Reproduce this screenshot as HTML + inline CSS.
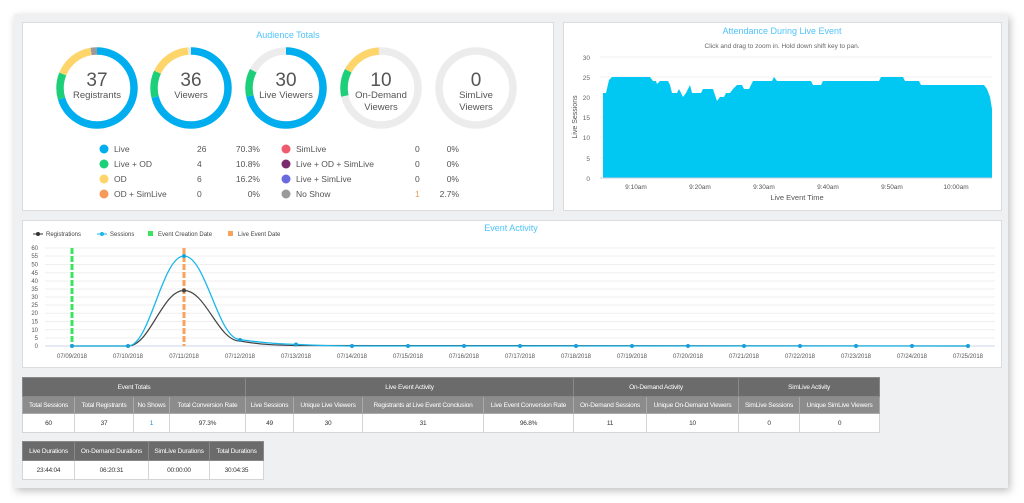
<!DOCTYPE html>
<html><head><meta charset="utf-8"><style>
*{margin:0;padding:0;box-sizing:border-box}
body{width:1024px;height:503px;background:#fff;font-family:"Liberation Sans",sans-serif;position:relative;overflow:hidden;color:#555}
.frame{position:absolute;left:14px;top:14px;width:994px;height:474px;background:#eff0f2;box-shadow:2px 3px 8px rgba(0,0,0,.25)}
.panel{position:absolute;background:#fff;border:1px solid #dcdcdc}
table{position:absolute;border-collapse:collapse;font-size:6.5px;letter-spacing:-0.2px;font-family:"Liberation Sans",sans-serif;table-layout:fixed}
td,th{border:1px solid #d5d5d5;text-align:center;padding:0;white-space:nowrap;overflow:hidden}
th{color:#fff;font-weight:normal}
.h1 th{background:#6b6b6b;height:19px;border-color:#888}
.h2 th{background:#8c8c8c;height:17px;border-color:#aaa}
td{background:#fff;height:19px;color:#333}
</style></head><body>
<div class="frame"></div>
<div class="panel" style="left:22px;top:22px;width:532px;height:189px"></div>
<div class="panel" style="left:563px;top:22px;width:439px;height:189px"></div>
<div class="panel" style="left:22px;top:220px;width:980px;height:148px"></div>

<svg width="1024" height="503" style="position:absolute;left:0;top:0" font-family="Liberation Sans, sans-serif">
<text x="288" y="38" font-size="9" fill="#4fc3f7" text-anchor="middle">Audience Totals</text>
<g fill="none" stroke-width="7.5">
 <g transform="translate(97,88) rotate(-90)">
  <circle r="37" stroke="#00aeef" stroke-dasharray="163.4 232.5"/>
  <circle r="37" stroke="#1ecf7a" stroke-dasharray="0 163.4 25.1 232.5"/>
  <circle r="37" stroke="#fdd56b" stroke-dasharray="0 188.5 37.7 232.5"/>
  <circle r="37" stroke="#9a9a9a" stroke-dasharray="0 226.2 6.3 232.5"/>
 </g>
 <g transform="translate(191,88) rotate(-90)">
  <circle r="37" stroke="#00aeef" stroke-dasharray="165 232.5"/>
  <circle r="37" stroke="#1ecf7a" stroke-dasharray="0 165 25.4 232.5"/>
  <circle r="37" stroke="#fdd56b" stroke-dasharray="0 190.4 38.6 232.5"/>
  <circle r="37" stroke="#e8e8e8" stroke-dasharray="0 229 3.5 232.5"/>
 </g>
 <g transform="translate(286,88) rotate(-90)">
  <circle r="37" stroke="#ececec"/>
  <circle r="37" stroke="#00aeef" stroke-dasharray="166 232.5"/>
  <circle r="37" stroke="#1ecf7a" stroke-dasharray="0 166 26 232.5"/>
 </g>
 <g transform="translate(381,88) rotate(-90)">
  <circle r="37" stroke="#ececec"/>
  <circle r="37" stroke="#1ecf7a" stroke-dasharray="0 166 26 232.5"/>
  <circle r="37" stroke="#fdd56b" stroke-dasharray="0 192 38 232.5"/>
 </g>
 <g transform="translate(476,88) rotate(-90)">
  <circle r="37" stroke="#ececec"/>
 </g>
</g>
<g fill="#555" text-anchor="middle">
 <text x="97" y="86" font-size="19">37</text><text x="97" y="98" font-size="9.5">Registrants</text>
 <text x="191" y="86" font-size="19">36</text><text x="191" y="98" font-size="9.5">Viewers</text>
 <text x="286" y="86" font-size="19">30</text><text x="286" y="98" font-size="9.5">Live Viewers</text>
 <text x="381" y="86" font-size="19">10</text><text x="381" y="98" font-size="9.5">On-Demand</text><text x="381" y="110" font-size="9.5">Viewers</text>
 <text x="476" y="86" font-size="19">0</text><text x="476" y="98" font-size="9.5">SimLive</text><text x="476" y="110" font-size="9.5">Viewers</text>
</g>
<g font-size="8.5" fill="#555">
 <circle cx="104" cy="149" r="4.5" fill="#00aeef"/><text x="114" y="152">Live</text><text x="197" y="152">26</text><text x="260" y="152" text-anchor="end">70.3%</text>
 <circle cx="104" cy="164" r="4.5" fill="#1ecf7a"/><text x="114" y="167">Live + OD</text><text x="197" y="167">4</text><text x="260" y="167" text-anchor="end">10.8%</text>
 <circle cx="104" cy="179" r="4.5" fill="#fdd56b"/><text x="114" y="182">OD</text><text x="197" y="182">6</text><text x="260" y="182" text-anchor="end">16.2%</text>
 <circle cx="104" cy="194" r="4.5" fill="#f59a5a"/><text x="114" y="197">OD + SimLive</text><text x="197" y="197">0</text><text x="260" y="197" text-anchor="end">0%</text>
 <circle cx="286" cy="149" r="4.5" fill="#ee5a6e"/><text x="296" y="152">SimLive</text><text x="415" y="152">0</text><text x="459" y="152" text-anchor="end">0%</text>
 <circle cx="286" cy="164" r="4.5" fill="#7a2a6e"/><text x="296" y="167">Live + OD + SimLive</text><text x="415" y="167">0</text><text x="459" y="167" text-anchor="end">0%</text>
 <circle cx="286" cy="179" r="4.5" fill="#6a6ae0"/><text x="296" y="182">Live + SimLive</text><text x="415" y="182">0</text><text x="459" y="182" text-anchor="end">0%</text>
 <circle cx="286" cy="194" r="4.5" fill="#999"/><text x="296" y="197">No Show</text><text x="415" y="197" fill="#e0a050">1</text><text x="459" y="197" text-anchor="end">2.7%</text>
</g>

<text x="782" y="34" font-size="9" fill="#4fc3f7" text-anchor="middle">Attendance During Live Event</text>
<text x="782" y="48" font-size="6.5" fill="#666" text-anchor="middle">Click and drag to zoom in. Hold down shift key to pan.</text>
<g stroke="#f0f0f0" stroke-width="1">
 <line x1="600" y1="57" x2="992" y2="57"/><line x1="600" y1="77" x2="992" y2="77"/><line x1="600" y1="97" x2="992" y2="97"/><line x1="600" y1="117" x2="992" y2="117"/><line x1="600" y1="137" x2="992" y2="137"/><line x1="600" y1="158" x2="992" y2="158"/>
</g>
<g font-size="6.5" fill="#666" text-anchor="end">
 <text x="590" y="60">30</text><text x="590" y="80">25</text><text x="590" y="100">20</text><text x="590" y="120">15</text><text x="590" y="140">10</text><text x="590" y="161">5</text><text x="590" y="181">0</text>
</g>
<path fill="#00c8f2" d="M603,178 L603,93 L606,93 L609,80 L612,77 L650,77 L653,81 L656,81 L657,84 L660,81 L668,81 L670,85 L672,93 L677,93 L679,89 L683,97 L686,93 L688,89 L690,85 L692,93 L701,93 L703,89 L713,89 L717,101 L720,97 L724,97 L726,93 L730,93 L733,89 L737,85 L742,85 L744,89 L749,89 L753,81 L772,81 L774,77 L777,81 L811,81 L813,85 L821,85 L823,81 L879,81 L881,77 L903,77 L905,81 L919,81 L921,85 L984,85 L987,89 L990,97 L992,109 L992,178 Z"/>
<line x1="600" y1="178" x2="992" y2="178" stroke="#ccd" stroke-width="1"/>
<g font-size="6.5" fill="#555" text-anchor="middle">
 <text x="636" y="189">9:10am</text><text x="700" y="189">9:20am</text><text x="764" y="189">9:30am</text><text x="828" y="189">9:40am</text><text x="892" y="189">9:50am</text><text x="956" y="189">10:00am</text>
</g>
<text x="797" y="200" font-size="7.5" fill="#555" text-anchor="middle">Live Event Time</text>
<text transform="translate(577,117) rotate(-90)" font-size="7" fill="#555" text-anchor="middle">Live Sessions</text>

<text x="511" y="231" font-size="9" fill="#4fc3f7" text-anchor="middle">Event Activity</text>
<g font-size="6" fill="#444">
 <line x1="33" y1="234" x2="43" y2="234" stroke="#333"/><circle cx="38" cy="234" r="2" fill="#333"/><text x="46" y="236">Registrations</text>
 <line x1="97" y1="234" x2="107" y2="234" stroke="#1ab7ea"/><circle cx="102" cy="234" r="2" fill="#1ab7ea"/><text x="110" y="236">Sessions</text>
 <rect x="148" y="231" width="5" height="5" fill="#3de35c"/><text x="158" y="236">Event Creation Date</text>
 <rect x="228" y="231" width="5" height="5" fill="#f7a35c"/><text x="238" y="236">Live Event Date</text>
</g>
<g stroke="#efefef" stroke-width="1">
 <line x1="45" y1="248" x2="995" y2="248"/><line x1="45" y1="256" x2="995" y2="256"/><line x1="45" y1="264.5" x2="995" y2="264.5"/><line x1="45" y1="272.7" x2="995" y2="272.7"/><line x1="45" y1="281" x2="995" y2="281"/><line x1="45" y1="289" x2="995" y2="289"/><line x1="45" y1="297" x2="995" y2="297"/><line x1="45" y1="305" x2="995" y2="305"/><line x1="45" y1="313.3" x2="995" y2="313.3"/><line x1="45" y1="321.5" x2="995" y2="321.5"/><line x1="45" y1="329.7" x2="995" y2="329.7"/><line x1="45" y1="338" x2="995" y2="338"/>
</g>
<line x1="45" y1="346" x2="995" y2="346" stroke="#ccd6eb"/>
<g font-size="6" fill="#555" text-anchor="end">
 <text x="38" y="250">60</text><text x="38" y="258">55</text><text x="38" y="266.5">50</text><text x="38" y="275">45</text><text x="38" y="283">40</text><text x="38" y="291">35</text><text x="38" y="299">30</text><text x="38" y="307">25</text><text x="38" y="315">20</text><text x="38" y="323.5">15</text><text x="38" y="332">10</text><text x="38" y="340">5</text><text x="38" y="348">0</text>
</g>
<line x1="72" y1="248" x2="72" y2="346" stroke="#3de35c" stroke-width="3" stroke-dasharray="6 2"/>
<line x1="184" y1="248" x2="184" y2="346" stroke="#f7a35c" stroke-width="3" stroke-dasharray="6 2"/>
<path fill="none" stroke="#444" stroke-width="1.2" d="M72,346 L128,346 C150,346 162,290.5 184,290.5 C206,290.5 218,341 240,341 C262,345 280,345.2 296,345.5 L968,346"/>
<path fill="none" stroke="#1ab7ea" stroke-width="1.3" d="M72,346 L128,346 C150,346 162,256 184,256 C206,256 218,339.5 240,339.5 C262,343 280,344 296,344.4 C320,345.5 340,346 352,346 L968,346"/>
<g fill="#1a9fd6">
 <circle cx="72" cy="346" r="2"/><circle cx="128" cy="346" r="2"/><circle cx="184" cy="256" r="2"/><circle cx="184" cy="290.5" r="2" fill="#444"/><circle cx="240" cy="340" r="2"/><circle cx="296" cy="344.5" r="2"/>
 <circle cx="352" cy="346" r="2"/><circle cx="408" cy="346" r="2"/><circle cx="464" cy="346" r="2"/><circle cx="520" cy="346" r="2"/><circle cx="576" cy="346" r="2"/><circle cx="632" cy="346" r="2"/><circle cx="688" cy="346" r="2"/><circle cx="744" cy="346" r="2"/><circle cx="800" cy="346" r="2"/><circle cx="856" cy="346" r="2"/><circle cx="912" cy="346" r="2"/><circle cx="968" cy="346" r="2"/>
</g>
<g font-size="6" fill="#555" text-anchor="middle">
 <text x="72" y="358">07/09/2018</text><text x="128" y="358">07/10/2018</text><text x="184" y="358">07/11/2018</text><text x="240" y="358">07/12/2018</text><text x="296" y="358">07/13/2018</text><text x="352" y="358">07/14/2018</text><text x="408" y="358">07/15/2018</text><text x="464" y="358">07/16/2018</text><text x="520" y="358">07/17/2018</text><text x="576" y="358">07/18/2018</text><text x="632" y="358">07/19/2018</text><text x="688" y="358">07/20/2018</text><text x="744" y="358">07/21/2018</text><text x="800" y="358">07/22/2018</text><text x="856" y="358">07/23/2018</text><text x="912" y="358">07/24/2018</text><text x="968" y="358">07/25/2018</text>
</g>
</svg>

<table style="left:22px;top:377px;width:857px">
<colgroup><col style="width:52px"><col style="width:59px"><col style="width:36px"><col style="width:76px"><col style="width:48px"><col style="width:69px"><col style="width:121px"><col style="width:90px"><col style="width:73px"><col style="width:92px"><col style="width:61px"><col style="width:80px"></colgroup>
<tr class="h1"><th colspan="4">Event Totals</th><th colspan="4">Live Event Activity</th><th colspan="2">On-Demand Activity</th><th colspan="2">SimLive Activity</th></tr>
<tr class="h2"><th>Total Sessions</th><th>Total Registrants</th><th>No Shows</th><th>Total Conversion Rate</th><th>Live Sessions</th><th>Unique Live Viewers</th><th>Registrants at Live Event Conclusion</th><th>Live Event Conversion Rate</th><th>On-Demand Sessions</th><th>Unique On-Demand Viewers</th><th>SimLive Sessions</th><th>Unique SimLive Viewers</th></tr>
<tr><td>60</td><td>37</td><td style="color:#1a8fd6">1</td><td>97.3%</td><td>49</td><td>30</td><td>31</td><td>96.8%</td><td>11</td><td>10</td><td>0</td><td>0</td></tr>
</table>
<table style="left:22px;top:441px;width:241px">
<colgroup><col style="width:52px"><col style="width:74px"><col style="width:61px"><col style="width:54px"></colgroup>
<tr class="h1"><th>Live Durations</th><th>On-Demand Durations</th><th>SimLive Durations</th><th>Total Durations</th></tr>
<tr><td>23:44:04</td><td>06:20:31</td><td>00:00:00</td><td>30:04:35</td></tr>
</table>
</body></html>
